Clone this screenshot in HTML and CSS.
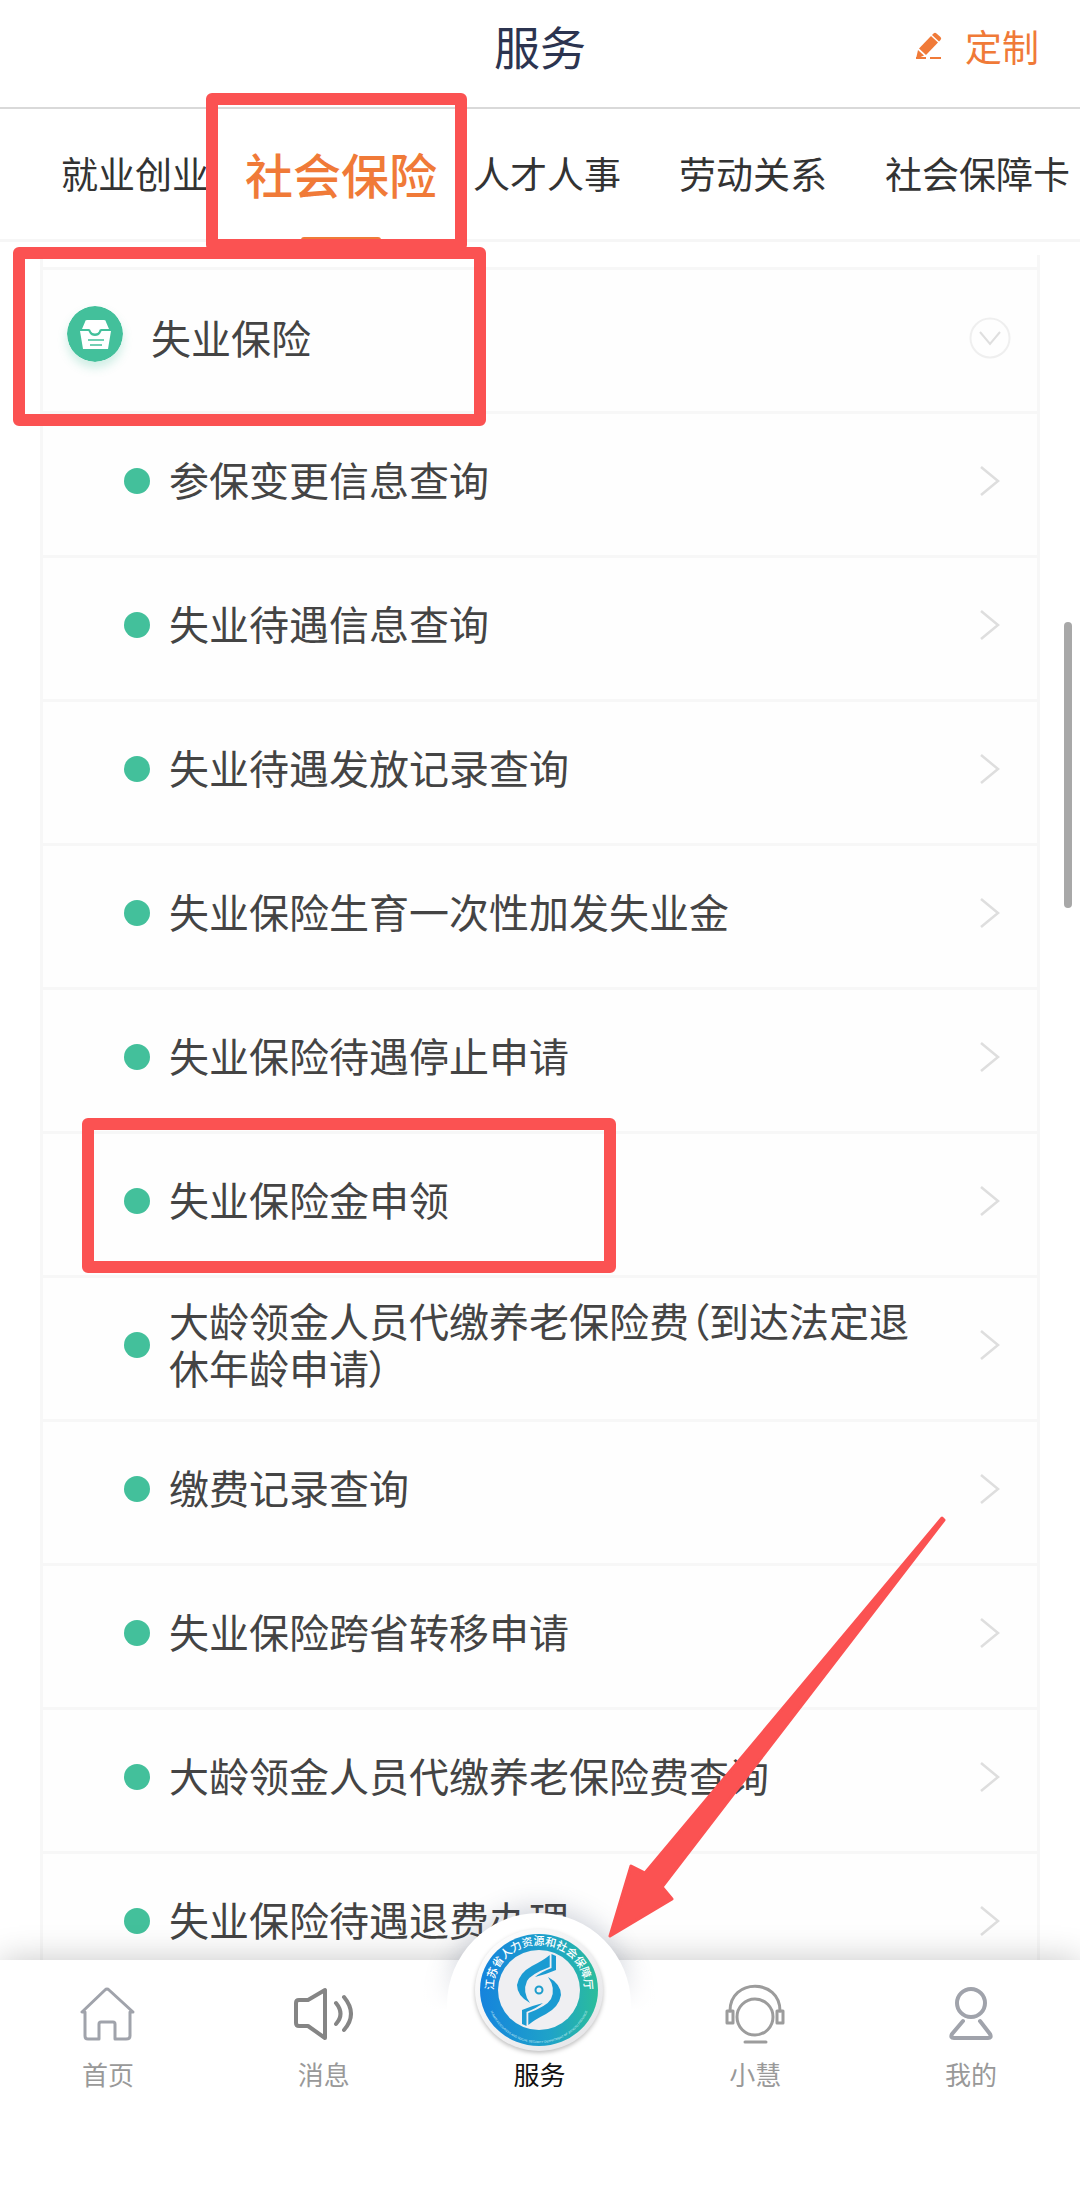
FILE: index.html
```html
<!DOCTYPE html>
<html lang="zh-CN">
  <head>
    <meta charset="utf-8" />
    <meta name="viewport" content="width=device-width, initial-scale=1" />
    <title>服务</title>
    <link rel="stylesheet" href="styles.css">
  </head>
  <body>
    <!-- shared row arrow -->
    <svg class="defs" width="0" height="0" aria-hidden="true">
      <symbol id="arrow" viewBox="0 0 20 32">
        <path d="M1 2l17 14L1 30" fill="none" stroke="#dedede" stroke-width="2.500"/>
      </symbol>
    </svg>

    <header class="topbar">
      <h1>服务</h1>
      <a class="custom" href="#">
        <svg width="28" height="28" viewBox="0 0 28 28" aria-hidden="true">
          <g fill="#f07a38">
            <path d="M18.500 1.500q1.500-1.500 3 0l4 3.500q1.500 1.500 0 3L24 9.500 17 3z"/>
            <path d="M16 4l7 6.500L11 23 4 16.500z"/>
            <path d="M3 18l6 5.500L1 27z"/>
            <path d="M1 25h10v2H1zM15 25h11v2H15z"/>
          </g>
        </svg>
        定制
      </a>
    </header>

    <nav class="tabs">
      <a href="#">就业创业</a>
      <a class="active" href="#">社会保险<span class="mark mark-tab"></span></a>
      <a href="#">人才人事</a>
      <a href="#">劳动关系</a>
      <a href="#">社会保障卡</a>
    </nav>

    <main class="content">
      <section class="card">
        <button class="group" type="button">
          <svg class="group-icon" width="56" height="56" viewBox="0 0 56 56" aria-hidden="true">
            <circle cx="28" cy="28" r="28" fill="#43c09b"/>
            <path d="M20 14h17q2 0 2 2l3 7h-8q-2 0-2 2.500-1 2-4 2t-4-2Q23.500 23 22 23h-7l3-7q0-2 2-2z" fill="#fff"/>
            <path d="M13 25h8q1 0 1.500 2 1.500 3 5.500 3t5.500-3q.500-2 1.500-2h9l-3 18H16z" fill="#fff"/>
            <path d="M21 34h16M23 39h12" stroke="#43c09b" stroke-width="1.500"/>
          </svg>
          <span class="label">失业保险</span>
          <svg class="toggle" width="42" height="42" viewBox="0 0 42 42" fill="none" aria-hidden="true">
            <circle cx="21" cy="21" r="19.500" stroke="#efefef" stroke-width="2"/>
            <path d="M11 15l10 12 10-12" stroke="#dfdfdf" stroke-width="2"/>
          </svg>
          <span class="mark mark-group"></span>
        </button>
        <ul class="rows">
          <li><a href="#"><span class="label">参保变更信息查询</span><svg class="arrow"><use href="#arrow"/></svg></a></li>
          <li><a href="#"><span class="label">失业待遇信息查询</span><svg class="arrow"><use href="#arrow"/></svg></a></li>
          <li><a href="#"><span class="label">失业待遇发放记录查询</span><svg class="arrow"><use href="#arrow"/></svg></a></li>
          <li><a href="#"><span class="label">失业保险生育一次性加发失业金</span><svg class="arrow"><use href="#arrow"/></svg></a></li>
          <li><a href="#"><span class="label">失业保险待遇停止申请</span><svg class="arrow"><use href="#arrow"/></svg></a></li>
          <li><a href="#"><span class="label">失业保险金申领</span><svg class="arrow"><use href="#arrow"/></svg><span class="mark mark-row"></span></a></li>
          <li><a href="#"><span class="label">大龄领金人员代缴养老保险费（到达法定退休年龄申请）</span><svg class="arrow"><use href="#arrow"/></svg></a></li>
          <li><a href="#"><span class="label">缴费记录查询</span><svg class="arrow"><use href="#arrow"/></svg></a></li>
          <li><a href="#"><span class="label">失业保险跨省转移申请</span><svg class="arrow"><use href="#arrow"/></svg></a></li>
          <li><a href="#"><span class="label">大龄领金人员代缴养老保险费查询</span><svg class="arrow"><use href="#arrow"/></svg></a></li>
          <li><a href="#"><span class="label">失业保险待遇退费办理</span><svg class="arrow"><use href="#arrow"/></svg></a></li>
        </ul>
      </section>
      <span class="thumb"></span>
    </main>

    <footer class="tabbar">
      <a href="#">
        <svg width="60" height="60" viewBox="0 0 60 60" fill="none" stroke="#a0a3ab" stroke-width="3" stroke-linecap="round" stroke-linejoin="round" aria-hidden="true">
          <path d="M4 28h3v24q0 3 3 3h11V40q0-2 2-2h12q2 0 2 2v15h11q4 0 4-3V28h3L31 6q-2-2-4 0z"/>
        </svg>
        首页
      </a>
      <a href="#">
        <svg width="60" height="60" viewBox="0 0 60 60" fill="none" stroke="#858585" stroke-width="4" stroke-linecap="round" stroke-linejoin="round" aria-hidden="true">
          <path d="M5 16h9L31 6v48L14 42H5q-3 0-3-3V19q0-3 3-3z"/>
          <path d="M42 19q9 11 0 21M50 13q14 17 0 33"/>
        </svg>
        消息
      </a>
      <a class="current" href="#">
        <svg class="emblem" width="136" height="136" viewBox="0 0 136 136" aria-hidden="true">
          <defs>
            <linearGradient id="ring" x1="0" y1="0" x2="1" y2="0">
              <stop offset="0" stop-color="#1583dd"/>
              <stop offset=".6" stop-color="#1fa3c8"/>
              <stop offset="1" stop-color="#2bbd9b"/>
            </linearGradient>
            <linearGradient id="plate" x1="0" y1="0" x2="1" y2="1">
              <stop offset="0" stop-color="#fff"/>
              <stop offset="1" stop-color="#e3e3e6"/>
            </linearGradient>
            <path id="arc-top" d="M23.400 74A45.500 43.500 0 1 1 112.600 74"/>
            <path id="arc-bottom" d="M16 70A52 50 0 0 0 120 70"/>
            <g id="wave">
              <path d="M10.700-35V-23Q-8-16-12-9-17 2-9 13-22 6-22-5-20-17-7-24 5-30 10.700-35z"/>
              <path d="M12.500-36L17-34V-20Q8-16-4-13 2-18 12.500-22z"/>
            </g>
          </defs>
          <ellipse class="plate" cx="68" cy="67" rx="64" ry="61" fill="url(#plate)"/>
          <ellipse cx="68" cy="67" rx="59" ry="56" fill="url(#ring)"/>
          <ellipse cx="68" cy="67" rx="41" ry="40" fill="#efeff2"/>
          <text class="ring-cn"><textPath href="#arc-top" startOffset="50%" text-anchor="middle">江苏省人力资源和社会保障厅</textPath></text>
          <text class="ring-en"><textPath href="#arc-bottom" startOffset="50%" text-anchor="middle">HUMAN RESOURCES AND SOCIAL SECURITY DEPARTMENT OF JIANGSU PROVINCE</textPath></text>
          <g fill="#1b9bd2" transform="translate(68 67)">
            <use href="#wave"/>
            <use href="#wave" transform="rotate(180)"/>
            <circle r="3.500" fill="none" stroke="#1d9dcc" stroke-width="2"/>
          </g>
        </svg>
        服务
      </a>
      <a href="#">
        <svg width="60" height="60" viewBox="0 0 60 60" fill="none" stroke="#9c9c9c" stroke-width="3" stroke-linecap="round" stroke-linejoin="round" aria-hidden="true">
          <path d="M5 27C5-6 55-6 55 27"/>
          <circle cx="30" cy="33" r="18"/>
          <rect x="2" y="27" width="6" height="12"/>
          <rect x="52" y="27" width="6" height="12"/>
          <path d="M20 58h21"/>
        </svg>
        小慧
      </a>
      <a href="#">
        <svg width="60" height="60" viewBox="0 0 60 60" fill="none" stroke="#a0a3ab" stroke-width="4" stroke-linecap="round" stroke-linejoin="round" aria-hidden="true">
          <circle cx="30" cy="19" r="14"/>
          <path d="M22 37L11 50q-2 4 2 4h34q4 0 2-4L39 37"/>
        </svg>
        我的
      </a>
      <svg class="pointer" width="340" height="424" viewBox="0 0 340 424" aria-hidden="true">
        <path d="M334 2L37 357 23 350 2 420 64 383 54 371 336 4z" fill="#fb5252" stroke="#fb5252" stroke-width="3" stroke-linejoin="round"/>
      </svg>
    </footer>
  </body>
</html>
```

FILE: styles.css
```css
* {
  box-sizing: border-box;
}
body {
  margin: 0;
  height: 100vh;
  display: flex;
  flex-direction: column;
  overflow: hidden;
  background: #fff;
  color: #444;
  font-family: "Noto Sans CJK SC", sans-serif;
  font-size: 40px;
}
a {
  color: inherit;
  text-decoration: none;
}
.defs {
  position: absolute;
}

/* top bar */
.topbar {
  display: grid;
  grid-template-columns: 1fr auto 1fr;
  align-items: center;
  padding: 15px 41px 30px;
  border-bottom: 2px solid #d9d9d9;
}
.topbar h1 {
  grid-column: 2;
  margin: 0;
  padding-bottom: 2px;
  font-size: 46px;
  font-weight: 400;
  line-height: 60px;
  color: #2c3450;
}
.custom {
  justify-self: end;
  display: flex;
  align-items: center;
  gap: 22px;
  font-size: 37px;
  line-height: 62px;
  color: #f07a38;
}

/* category tabs */
.tabs {
  display: flex;
  align-items: center;
  gap: 58px;
  padding: 0 0 2px 61px;
  border-bottom: 3px solid #f6f6f6;
  font-size: 37px;
  line-height: 128px;
  white-space: nowrap;
  color: #333;
}
.tabs .active {
  position: relative;
  z-index: 2;
  margin: 0 -22px;
  font-size: 48px;
  font-weight: 500;
  color: #f07a38;
}
.tabs .active::before {
  content: "";
  position: absolute;
  left: 56px;
  right: 56px;
  bottom: -6px;
  height: 6px;
  border-radius: 3px;
  background: #f07a38;
}

/* red highlight frames */
.mark {
  position: absolute;
  z-index: 2;
  border: 12px solid #fb5252;
  border-radius: 6px;
  pointer-events: none;
}
.mark-tab {
  inset: -16px -30px -14px -39px;
}
.mark-group {
  top: -23px;
  bottom: -15px;
  left: -30px;
  width: 473px;
}
.mark-row {
  top: -16px;
  bottom: 2px;
  left: 39px;
  width: 534px;
}

/* service list */
.content {
  position: relative;
  flex: 1;
  min-height: 0;
  overflow: hidden;
}
.card {
  margin: 13px 40px 0;
  padding-top: 12px;
  border: solid #f7f7f7;
  border-width: 0 3px;
}
.group,
.rows a {
  position: relative;
  display: flex;
  align-items: center;
  width: 100%;
  height: 144px;
  padding: 0 37px 8px 81px;
  border: 0;
  border-top: 3px solid #f7f7f7;
  background: #fefefe;
  color: inherit;
  font: inherit;
  line-height: 47px;
  text-align: left;
}
.group {
  z-index: 1;
  padding: 0 26px 6px 24px;
}
.group-icon {
  margin-bottom: 8px;
  border-radius: 50%;
  box-shadow: 0 6px 10px rgba(67, 192, 155, .25);
}
.group .label {
  margin-left: 28px;
}
.toggle {
  margin-left: auto;
}
.rows {
  margin: 0;
  padding: 0;
  list-style: none;
}
.rows a::before {
  content: "";
  flex: none;
  width: 26px;
  height: 26px;
  margin-right: 19px;
  border-radius: 50%;
  background: #43c09b;
}
.rows .label {
  flex: 1;
  padding: 0 48px 2px 0;
  font-feature-settings: "palt";
}
.arrow {
  flex: none;
  width: 20px;
  height: 32px;
}
.thumb {
  position: absolute;
  top: 380px;
  right: 8px;
  width: 8px;
  height: 286px;
  border-radius: 4px;
  background: #a8a8a8;
}

/* bottom bar */
.tabbar {
  position: relative;
  display: grid;
  grid-template-columns: repeat(5, 1fr);
  padding: 24px 1px 93px 0;
  background: #fff;
  box-shadow: 0 0 32px rgba(0, 0, 0, .22);
  font-size: 26px;
  line-height: 36px;
  color: #999;
}
.tabbar > a {
  display: flex;
  flex-direction: column;
  align-items: center;
  justify-content: flex-end;
  gap: 12px;
}
.tabbar .current {
  position: relative;
  isolation: isolate;
  color: #111;
}
/* round bump behind the emblem */
.tabbar .current::before {
  content: "";
  position: absolute;
  z-index: -2;
  top: -71px;
  left: 50%;
  width: 184px;
  height: 184px;
  margin-left: -92px;
  border-radius: 50%;
  background: #fff;
  box-shadow: 0 -6px 24px rgba(60, 75, 105, .22);
}
/* fades the bump out into the bar */
.tabbar .current::after {
  content: "";
  position: absolute;
  z-index: -1;
  top: -24px;
  bottom: -60px;
  left: -20px;
  right: -20px;
  background: linear-gradient(rgba(255, 255, 255, 0), #fff 50px);
}
.emblem {
  position: absolute;
  top: -61px;
}
.plate {
  filter: drop-shadow(0 2px 2px rgba(0, 0, 0, .25));
}
.ring-cn {
  font-size: 11px;
  font-weight: 500;
  fill: #fff;
}
.ring-en {
  font-family: "Liberation Sans", sans-serif;
  font-size: 3px;
  fill: #d5f0f5;
}
.pointer {
  position: absolute;
  bottom: 245px;
  left: calc(50% + 68px);
  z-index: 3;
}
```
